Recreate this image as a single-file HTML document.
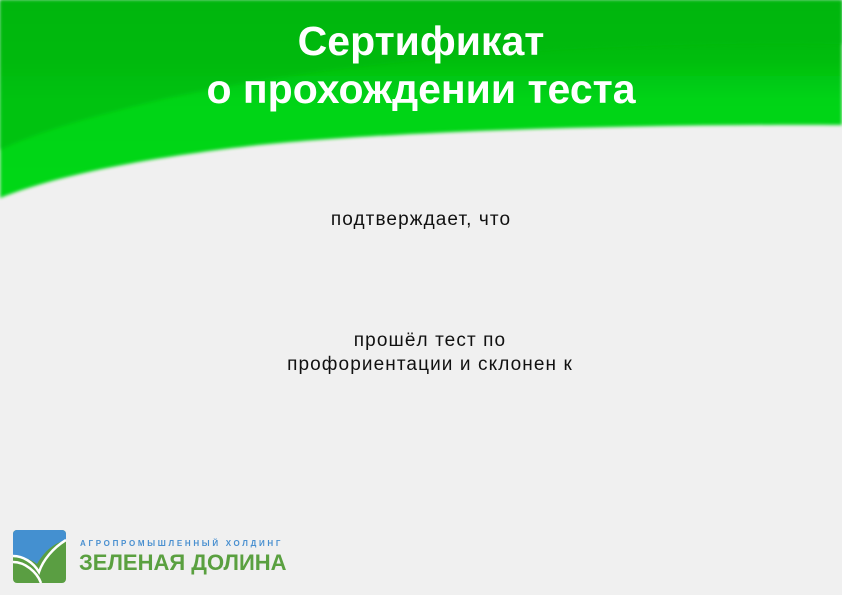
<!DOCTYPE html>
<html><head><meta charset="utf-8"><style>
html,body{margin:0;padding:0}
body{width:842px;height:595px;background:#f0f0f0;position:relative;overflow:hidden;font-family:"Liberation Sans",sans-serif}
svg.bg{position:absolute;left:0;top:0}
.t{position:absolute;left:0;width:842px;text-align:center;color:#fff;font-weight:bold;font-size:41px;line-height:48px}
.b{position:absolute;text-align:center;color:#111;font-size:19px;line-height:24px;letter-spacing:1.1px;white-space:nowrap}
</style></head><body>
<svg class="bg" width="842" height="595">
<defs>
<linearGradient id="g" x1="0" y1="0" x2="0" y2="1">
<stop offset="0" stop-color="#06b40f"/><stop offset="0.3" stop-color="#04bd10"/><stop offset="0.5" stop-color="#00d414"/><stop offset="1" stop-color="#02d814"/>
</linearGradient>
<filter id="f"><feGaussianBlur stdDeviation="1.5"/></filter>
</defs>
<path filter="url(#f)" d="M0 0 H842 V125 C700 124 420 128 250 146 C130 160 50 178 0 198 Z" fill="url(#g)"/>
<path filter="url(#f)" d="M0 0 H842 V44 C600 40 300 60 120 110 C60 125 20 140 0 150 Z" fill="#06b80f" opacity="0.6"/>
</svg>
<div class="t" style="top:17px">Сертификат</div>
<div class="t" style="top:65px">о прохождении теста</div>
<div class="b" style="left:221px;width:400px;top:208px">подтверждает, что</div>
<div class="b" style="left:230px;width:400px;top:329px">прошёл тест по<br>профориентации и склонен к</div>
<svg style="position:absolute;left:13px;top:530px" width="53" height="53" viewBox="0 0 53 53">
<defs><clipPath id="c"><rect width="53" height="53" rx="4"/></clipPath></defs>
<g clip-path="url(#c)">
<rect width="53" height="53" fill="#5a9e42"/>
<path d="M0 0 H53 V10 C38 14 30 24 24 34 C16 28 8 26 0 26 Z" fill="#4490d0"/>
<path d="M0 26 C10 26 20 32 26 42 C30 30 40 18 53 10" fill="none" stroke="#fff" stroke-width="2.5"/>
<path d="M0 32 C12 32 24 42 28 53" fill="none" stroke="#fff" stroke-width="2.5"/>
</g>
</svg>
<div style="position:absolute;left:80px;top:539px;font-size:8px;font-weight:bold;color:#4a90d0;letter-spacing:2.7px;white-space:nowrap">АГРОПРОМЫШЛЕННЫЙ ХОЛДИНГ</div>
<div style="position:absolute;left:79px;top:550px;font-size:22px;font-weight:bold;color:#5aa040;white-space:nowrap;letter-spacing:0px">ЗЕЛЕНАЯ ДОЛИНА</div>
</body></html>
